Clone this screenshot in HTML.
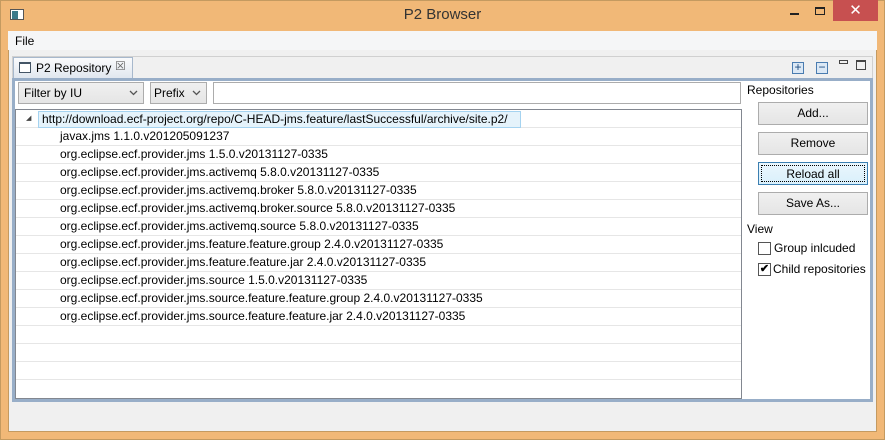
<!DOCTYPE html>
<html><head><style>
*{margin:0;padding:0;box-sizing:border-box}
body{width:885px;height:440px;background:#f1b877;font-family:"Liberation Sans",sans-serif;font-size:12px;color:#000;position:relative;overflow:hidden}
.a{position:absolute}
.btn{position:absolute;left:758px;width:110px;height:23px;background:linear-gradient(#f0f0f0,#e5e5e5);border:1px solid #acacac;text-align:center;line-height:21px}
.row{position:absolute;left:16px;width:725px;height:18px;border-bottom:1px solid #e6e6e6;line-height:17px;padding-left:44px;white-space:nowrap}
.arr{position:absolute;right:5px;top:7px}
</style></head><body>
<div class="a" style="left:0;top:0;width:885px;height:440px;border:1px solid #c49a60"></div>
<div class="a" style="left:10px;top:9px;width:14px;height:11px;border:1px solid #555;background:#fff"><div style="width:6px;height:8px;background:#3c7a8a;margin:1px"></div></div>
<div class="a" style="left:0;top:6px;width:885px;text-align:center;font-size:15px;color:#333">P2 Browser</div>
<div class="a" style="left:790px;top:13px;width:9px;height:2px;background:#222"></div>
<div class="a" style="left:815px;top:7px;width:10px;height:8px;border:1px solid #222;border-top-width:2px"></div>
<div class="a" style="left:833px;top:0;width:45px;height:21px;background:#c75050;color:#fff;text-align:center;font-size:15px;line-height:21px">✕</div>
<div class="a" style="left:8px;top:31px;width:869px;height:401px;background:#f0f0f0;border:1px solid #c49a60;border-top:none"></div>
<div class="a" style="left:8px;top:31px;width:869px;height:19px;background:#f5f6f7"></div>
<div class="a" style="left:15px;top:34px">File</div>
<div class="a" style="left:12px;top:56px;width:861px;height:346px;border:1px solid #d0d0d0;background:#f0f0f0"></div>
<div class="a" style="left:13px;top:57px;width:120px;height:22px;background:linear-gradient(#fafbfc,#dfe6ee);border:1px solid #a7b8cc;border-bottom:none"></div>
<div class="a" style="left:19px;top:62px;width:12px;height:11px;border:1px solid #456;border-top-width:2px;background:#fff"></div>
<div class="a" style="left:36px;top:61px">P2 Repository</div>
<div class="a" style="left:115px;top:59px;color:#666;font-size:12px">☒</div>
<div class="a" style="left:792px;top:62px;width:12px;height:12px;border:1px solid #4a7cb0;background:#dbe8f5;color:#1a4a80;font-size:12px;line-height:9px;text-align:center">+</div>
<div class="a" style="left:816px;top:62px;width:12px;height:12px;border:1px solid #4a7cb0;background:#dbe8f5;color:#1a4a80;font-size:12px;line-height:9px;text-align:center">−</div>
<div class="a" style="left:839px;top:60px;width:9px;height:4px;border:1px solid #444"></div>
<div class="a" style="left:856px;top:60px;width:10px;height:10px;border:1px solid #444;border-top-width:2px"></div>
<div class="a" style="left:12px;top:78px;width:861px;height:324px;border:3px solid #98aec8;background:#fff"></div>
<div class="a" style="left:18px;top:82px;width:126px;height:22px;border:1px solid #acacac;background:linear-gradient(#f0f0f0,#e5e5e5);padding:3px 5px">Filter by IU<svg class="arr" width="9" height="6"><path d="M1 1L4.5 4.5L8 1" stroke="#555" stroke-width="1.3" fill="none"/></svg></div>
<div class="a" style="left:150px;top:82px;width:57px;height:22px;border:1px solid #acacac;background:linear-gradient(#f0f0f0,#e5e5e5);padding:3px 3px">Prefix<svg class="arr" width="9" height="6"><path d="M1 1L4.5 4.5L8 1" stroke="#555" stroke-width="1.3" fill="none"/></svg></div>
<div class="a" style="left:213px;top:82px;width:528px;height:22px;border:1px solid #acacac;background:#fff"></div>
<div class="a" style="left:15px;top:109px;width:727px;height:290px;border:1px solid #828790;background:#fff"></div>
<div class="a" style="left:747px;top:83px">Repositories</div>
<div class="row" style="top:110px;padding-left:0"><span style="position:absolute;left:10px;top:0;font-size:7px;color:#444">◢</span><span style="position:absolute;left:22px;top:1px;width:483px;height:17px;background:#e5f3fb;border:1px solid #a5d3f0;padding-left:3px;line-height:15px">http://download.ecf-project.org/repo/C-HEAD-jms.feature/lastSuccessful/archive/site.p2/</span></div>
<div class="row" style="top:128px">javax.jms 1.1.0.v201205091237</div>
<div class="row" style="top:146px">org.eclipse.ecf.provider.jms 1.5.0.v20131127-0335</div>
<div class="row" style="top:164px">org.eclipse.ecf.provider.jms.activemq 5.8.0.v20131127-0335</div>
<div class="row" style="top:182px">org.eclipse.ecf.provider.jms.activemq.broker 5.8.0.v20131127-0335</div>
<div class="row" style="top:200px">org.eclipse.ecf.provider.jms.activemq.broker.source 5.8.0.v20131127-0335</div>
<div class="row" style="top:218px">org.eclipse.ecf.provider.jms.activemq.source 5.8.0.v20131127-0335</div>
<div class="row" style="top:236px">org.eclipse.ecf.provider.jms.feature.feature.group 2.4.0.v20131127-0335</div>
<div class="row" style="top:254px">org.eclipse.ecf.provider.jms.feature.feature.jar 2.4.0.v20131127-0335</div>
<div class="row" style="top:272px">org.eclipse.ecf.provider.jms.source 1.5.0.v20131127-0335</div>
<div class="row" style="top:290px">org.eclipse.ecf.provider.jms.source.feature.feature.group 2.4.0.v20131127-0335</div>
<div class="row" style="top:308px">org.eclipse.ecf.provider.jms.source.feature.feature.jar 2.4.0.v20131127-0335</div>
<div class="row" style="top:326px"></div>
<div class="row" style="top:344px"></div>
<div class="row" style="top:362px"></div>
<div class="btn" style="top:102px">Add...</div>
<div class="btn" style="top:132px">Remove</div>
<div class="btn" style="top:162px;border-color:#3c7fb1;background:linear-gradient(#eaf6fd,#d9f0fc)"><div style="position:absolute;left:2px;top:2px;right:2px;bottom:2px;border:1px dotted #000;line-height:16px">Reload all</div></div>
<div class="btn" style="top:192px">Save As...</div>
<div class="a" style="left:747px;top:222px">View</div>
<div class="a" style="left:758px;top:242px;width:13px;height:13px;border:1px solid #555;background:#fff"></div>
<div class="a" style="left:774px;top:241px">Group inlcuded</div>
<div class="a" style="left:758px;top:263px;width:13px;height:13px;border:1px solid #555;background:#fff;font-size:11px;line-height:11px;text-align:center;font-weight:bold">✔</div>
<div class="a" style="left:773px;top:262px">Child repositories</div>
</body></html>
